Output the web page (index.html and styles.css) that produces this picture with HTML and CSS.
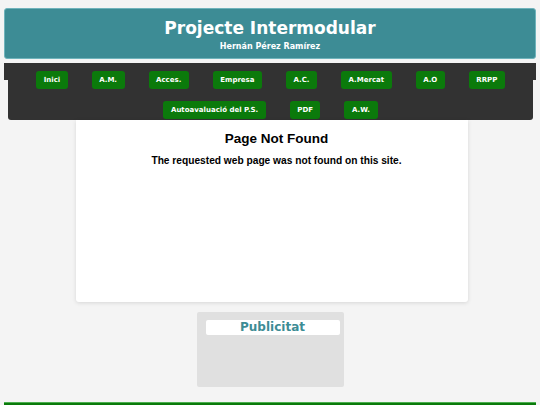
FILE: index.html
```html
<!DOCTYPE html>
<html>
<head>
<meta charset="utf-8">
<link rel="stylesheet" href="styles.css">
</head>
<body>
<header class="header">
  <h1 class="title">Projecte Intermodular</h1>
  <p class="author">Hernán Pérez Ramírez</p>
</header>
<nav class="nav">
  <ul class="menu">
    <li><a class="btn">Inici</a></li>
    <li><a class="btn">A.M.</a></li>
    <li><a class="btn">Acces.</a></li>
    <li><a class="btn">Empresa</a></li>
    <li><a class="btn">A.C.</a></li>
    <li><a class="btn">A.Mercat</a></li>
    <li><a class="btn">A.O</a></li>
    <li><a class="btn">RRPP</a></li>
    <li><a class="btn">Autoavaluació del P.S.</a></li>
    <li><a class="btn">PDF</a></li>
    <li><a class="btn">A.W.</a></li>
  </ul>
</nav>
<main class="card">
  <h2 class="nf-title">Page Not Found</h2>
  <p class="nf-text">The requested web page was not found on this site.</p>
</main>
<aside class="ads">
  <div class="ads-label">Publicitat</div>
</aside>
<footer class="footer"></footer>
</body>
</html>
```
FILE: styles.css
```css
* { box-sizing: border-box; }
html, body { margin: 0; padding: 0; }
body {
  background: #f4f4f4;
  font-family: "DejaVu Sans", Verdana, sans-serif;
  padding: 8px 4px 0;
}
.header {
  background: #3d8c95;
  border: 1px solid #6fb3bb;
  border-radius: 3px;
  height: 51px;
  text-align: center;
  color: #fff;
  padding-top: 8px;
}
.title {
  margin: 0;
  font-size: 17px;
  font-weight: bold;
  line-height: 22px;
}
.author {
  margin: 3px 0 0;
  font-size: 8px;
  font-weight: bold;
  line-height: 10px;
}
.nav {
  margin-top: 4px;
  background: linear-gradient(#323232, #323232) top left / 100% 17px no-repeat;
}
.menu {
  list-style: none;
  margin: 0 3px 0 4px;
  padding: 8px 10px 2px;
  background: #323232;
  border-radius: 0 0 3px 3px;
  display: flex;
  flex-wrap: wrap;
  justify-content: center;
  column-gap: 24px;
  row-gap: 12px;
  height: 57px;
}
.btn {
  display: block;
  background: #0b7a0b;
  color: #fff;
  font-size: 7px;
  font-weight: bold;
  line-height: 18px;
  height: 18px;
  padding: 0 7.5px;
  border-radius: 3px;
}
.card {
  display: block;
  width: 392px;
  margin: 0 auto;
  background: #fff;
  height: 182px;
  box-shadow: 0 1px 4px rgba(0,0,0,0.12);
  border-radius: 0 0 3px 3px;
  text-align: center;
  font-family: "Liberation Sans", Arial, sans-serif;
  padding: 10px 0 0 9px;
  position: relative;
  left: 2px;
}
.nf-title {
  margin: 0;
  font-size: 13.5px;
  line-height: 17px;
  font-weight: bold;
  color: #000;
}
.nf-text {
  margin: 7px 0 0;
  font-size: 10.2px;
  line-height: 13px;
  font-weight: bold;
  color: #000;
}
.ads {
  display: block;
  width: 147px;
  height: 75px;
  margin: 10px auto 0;
  background: #e0e0e0;
  border-radius: 2px;
  padding: 8px 4px 0 9px;
}
.ads-label {
  background: #fff;
  border-radius: 2px;
  height: 15px;
  line-height: 15px;
  text-align: center;
  color: #3d8c95;
  font-weight: bold;
  font-size: 12px;
}
.footer {
  margin-top: 15px;
  height: 6px;
  background: #0a7a0a;
  border-top: 1px solid #4caf50;
}
```
